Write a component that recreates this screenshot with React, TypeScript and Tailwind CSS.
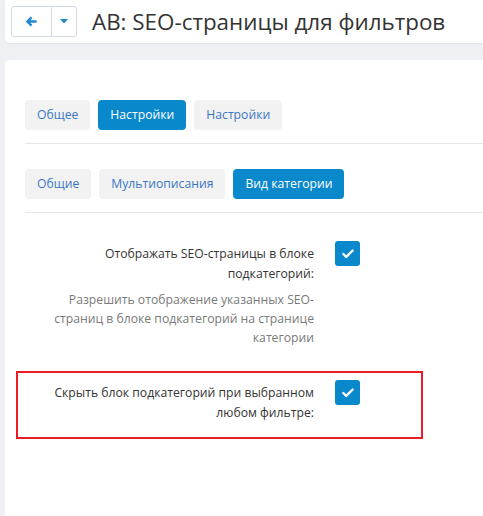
import { Check } from "lucide-react";

function Tab({ label, active }: { label: string; active?: boolean }) {
  return (
    <div
      className={`h-[30px] px-3 flex items-center rounded-[4px] text-[12.2px] ${
        active ? "bg-[#0a88cc] text-white" : "bg-[#f2f2f2] text-[#3b76c4]"
      }`}
    >
      {label}
    </div>
  );
}

function Checkbox() {
  return (
    <div className="w-[25px] h-[25px] rounded-[3px] bg-[#0a88cc] flex items-center justify-center">
      <Check className="w-[14px] h-[14px] text-white" strokeWidth={4} />
    </div>
  );
}

export default function App() {
  return (
    <div className="w-[483px] h-[516px] overflow-hidden bg-[#eef0f3] text-[#333] font-['Open_Sans',sans-serif]">
      <div className="ml-[5px] h-[43px] bg-white rounded-bl-[4px] shadow-[0_1px_2px_rgba(0,0,0,0.06)] flex items-center pl-[6px]">
        <div className="flex h-[31px] border border-[#d3d9e0] rounded-[3px]">
          <div className="w-[40px] flex items-center justify-center border-r border-[#d3d9e0]">
            <svg width="13" height="13" viewBox="0 0 14 14">
              <path d="M12.5 7H3.5M7 2.5L2.5 7L7 11.5" stroke="#1c88d3" strokeWidth="2.6" fill="none" strokeLinejoin="round" />
            </svg>
          </div>
          <div className="w-[24px] flex items-center justify-center">
            <svg width="8" height="5" viewBox="0 0 8 5">
              <path d="M0 0H8L4 4.5Z" fill="#1c88d3" />
            </svg>
          </div>
        </div>
        <div className="ml-[15px] text-[22.4px] text-[#333] whitespace-nowrap">AB: SEO-страницы для фильтров</div>
      </div>

      <div className="mt-[17px] ml-[5px] h-[500px] bg-white rounded-tl-[4px]">
        <div className="pl-[20px] pt-[40px]">
          <div className="flex gap-[8px]">
            <Tab label="Общее" />
            <Tab label="Настройки" active />
            <Tab label="Настройки" />
          </div>
          <div className="mt-[13px] border-t border-[#e3e6ea]" />
          <div className="mt-[25px] flex gap-[8px]">
            <Tab label="Общие" />
            <Tab label="Мультиописания" />
            <Tab label="Вид категории" active />
          </div>
          <div className="mt-[13px] border-t border-[#e3e6ea]" />
        </div>

        <div className="pl-[11px] pt-[19px] text-[12.2px] leading-[20px]">
          <div className="w-[407px] border-2 border-transparent flex pt-[7px] pb-[14px]">
            <div className="w-[296px] text-right pt-[3px]">
              <div className="pl-[80px]">Отображать SEO-страницы в блоке подкатегорий:</div>
              <div className="mt-[6px] text-[#7a7a7a] leading-[19px] pl-[36px]">
                Разрешить отображение указанных SEO-страниц в блоке подкатегорий на странице категории
              </div>
            </div>
            <div className="ml-[21px]">
              <Checkbox />
            </div>
          </div>
          <div className="mt-[8px] w-[407px] border-2 border-[#ec1c24] flex pt-[7px] pb-[14px]">
            <div className="w-[296px] text-right pt-[3px] pl-[30px]">
              Скрыть блок подкатегорий при выбранном любом фильтре:
            </div>
            <div className="ml-[21px]">
              <Checkbox />
            </div>
          </div>
        </div>
      </div>
    </div>
  );
}
